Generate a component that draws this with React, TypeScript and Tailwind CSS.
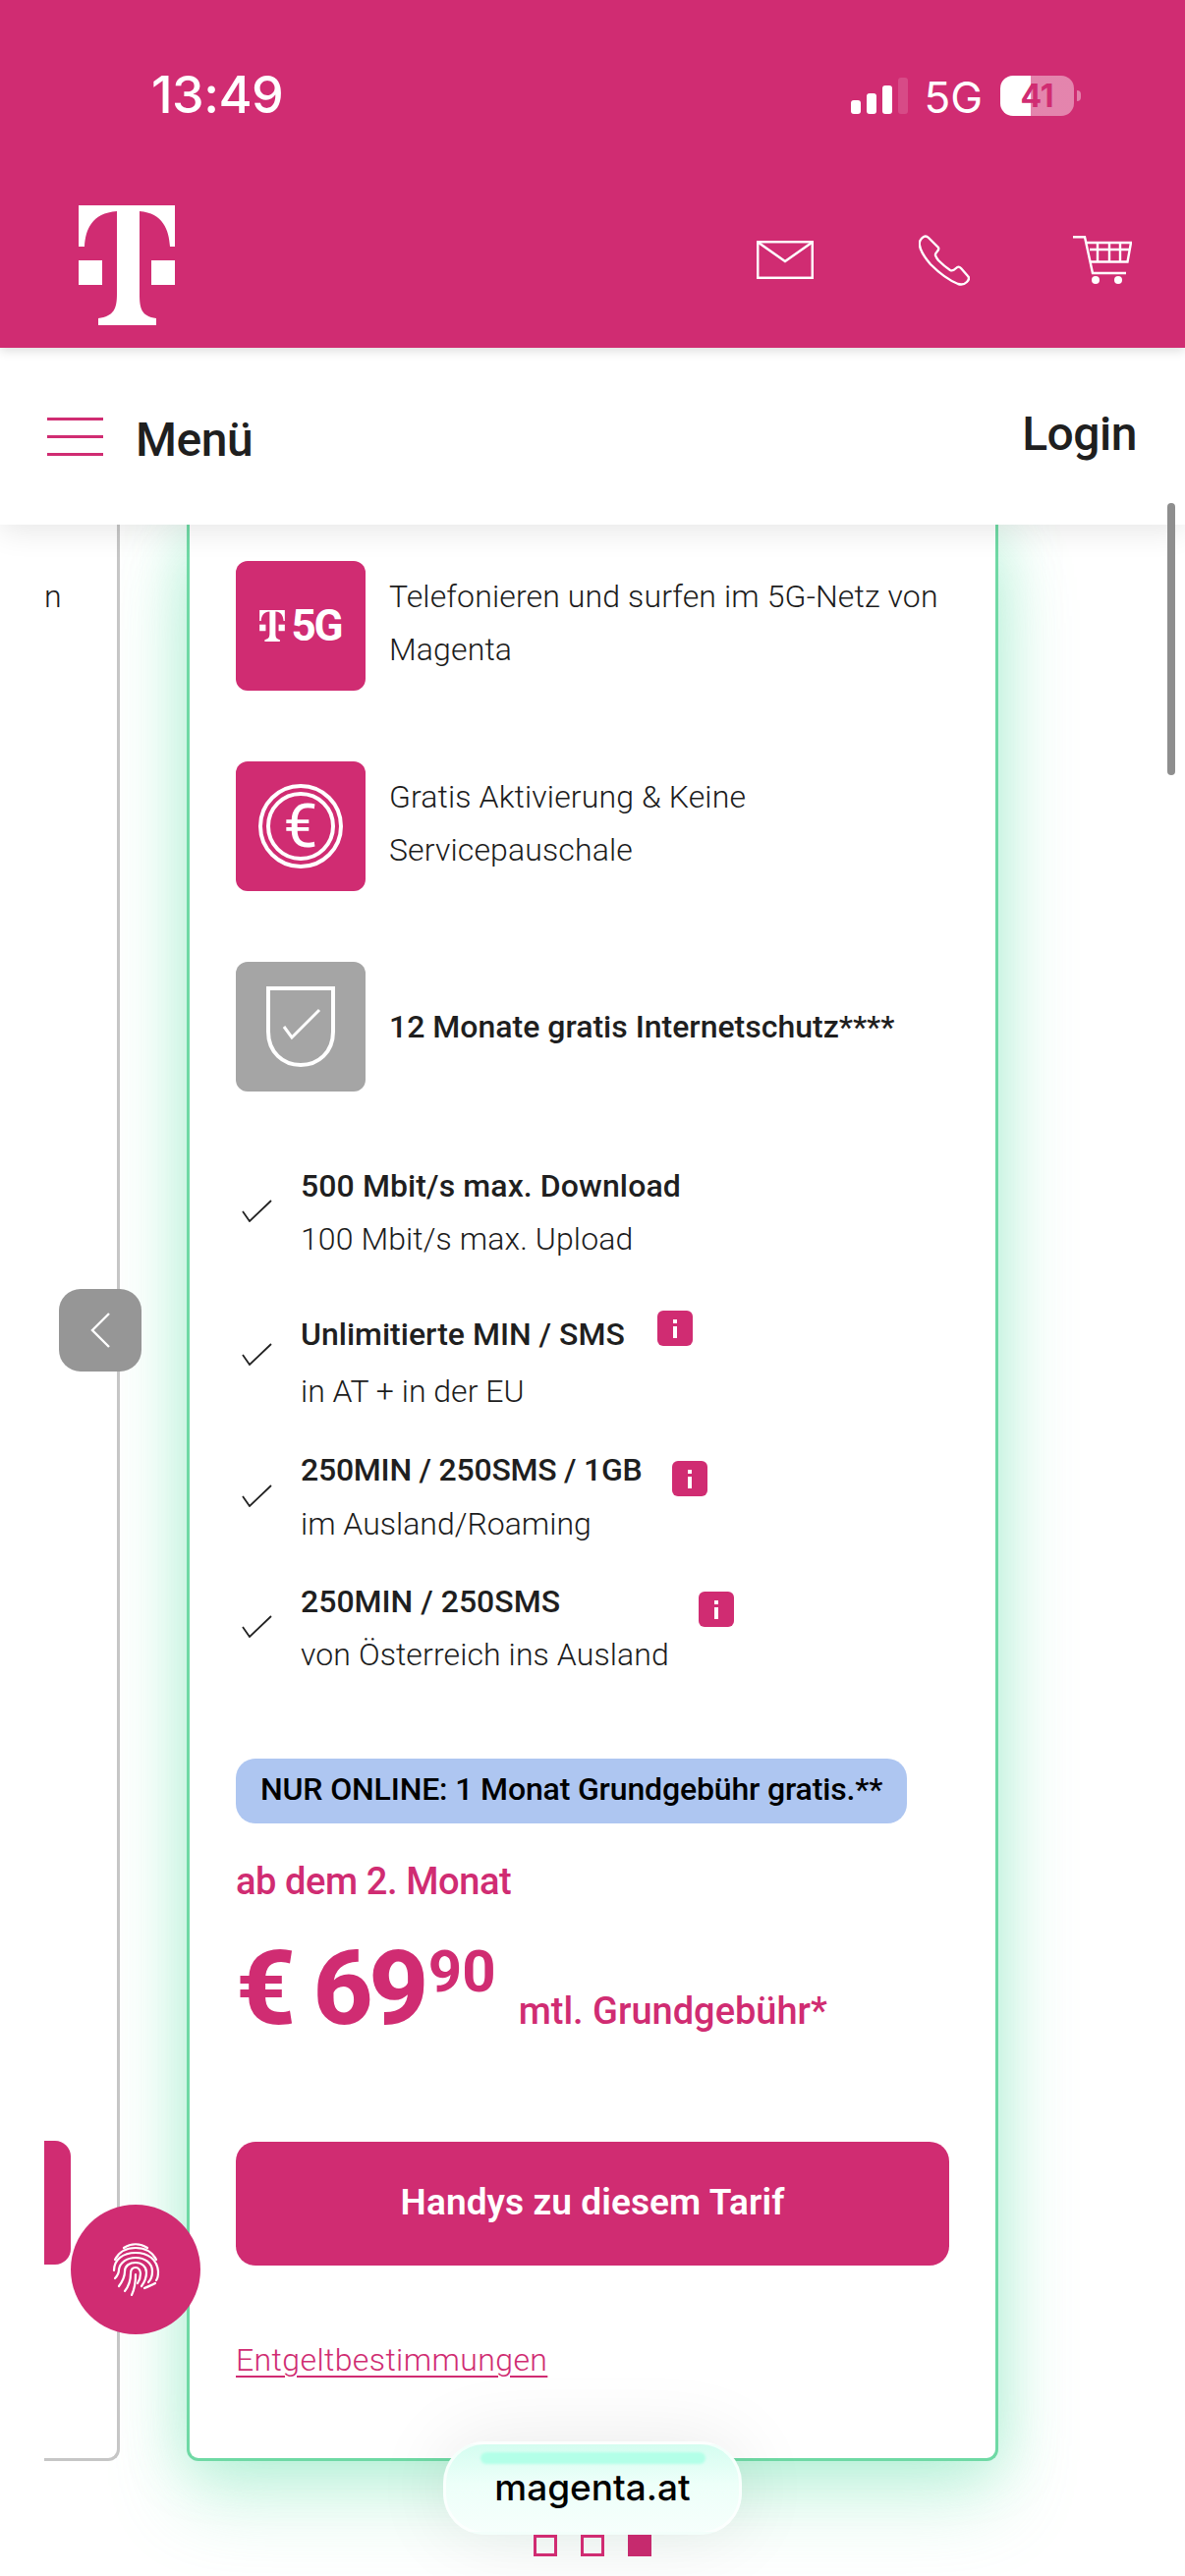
import React from 'react';

const MAGENTA = 'text-[#d02c72]';

function CheckMark({ className }: { className: string }) {
  return (
    <svg viewBox="0 0 31 23" className={`w-[31px] h-[23px] shrink-0 ${className}`} fill="none" stroke="#222" strokeWidth="1.8">
      <path d="M1 12l7 10L30 1" />
    </svg>
  );
}

function InfoBadge({ className }: { className: string }) {
  return (
    <span className={`w-9 h-9 shrink-0 rounded-md bg-[#d02c72] flex flex-col items-center justify-center gap-[3px] ${className}`}>
      <span className="w-[4px] h-[4px] bg-white" />
      <span className="w-[4px] h-[12px] bg-white" />
    </span>
  );
}

function TLogo({ className }: { className: string }) {
  return (
    <svg viewBox="0 0 98 122" className={className} fill="#fff">
      <path d="M0 0H98V42H93C92 25 86 8 62 6V90C62 105 64 113 79 115V122H20V115C36 113 39 105 39 90V6C13 8 7 25 6 42H0Z" />
      <rect x="0" y="56" width="24" height="25" />
      <rect x="74" y="56" width="24" height="25" />
    </svg>
  );
}

function StatusBar() {
  return (
    <div className="h-[200px] pl-[154px] pr-[106px] pt-[69px] flex items-start justify-between font-[Inter,sans-serif] text-white">
      <span className="text-[52px] leading-[56px] font-medium tracking-[-0.5px]">13:49</span>
      <div className="flex items-start pt-[8px]">
        <div className="flex items-end gap-[6px] h-[37px] mt-[2px]">
          <span className="w-[10px] h-[14px] rounded-[3px] bg-white" />
          <span className="w-[10px] h-[21px] rounded-[3px] bg-white" />
          <span className="w-[10px] h-[29px] rounded-[3px] bg-white" />
          <span className="w-[10px] h-[37px] rounded-[3px] bg-white/15" />
        </div>
        <span className="ml-[16px] text-[44px] leading-[40px] mt-[2px] font-normal">5G</span>
        <span className="ml-[18px] w-[75px] h-[41px] rounded-[13px] bg-[linear-gradient(90deg,#fff_41%,rgba(255,255,255,0.42)_41%)] text-[#d02c72] text-[32px] leading-[41px] font-bold text-center">41</span>
        <span className="ml-[3px] mt-[15px] w-[4px] h-[11px] rounded-r bg-white/40" />
      </div>
    </div>
  );
}

function Header() {
  return (
    <header className="relative z-30 bg-[#d02c72] h-[354px] shrink-0 shadow-[0_3px_10px_rgba(0,0,0,0.14)]">
      <StatusBar />
      <div className="flex items-center pl-[80px] pr-[54px] h-[122px] mt-[9px]">
        <TLogo className="w-[98px] h-[122px]" />
        <svg viewBox="0 0 58 39" className="ml-auto mb-[11px] w-[58px] h-[39px]" fill="none" stroke="#fff" strokeWidth="2.5">
          <rect x="1.2" y="1.2" width="55.6" height="36.6" />
          <path d="M2 2l27 19L56 2" />
        </svg>
        <svg viewBox="0 0 52 52" className="ml-[107px] mb-[11px] w-[52px] h-[52px]" fill="none" stroke="#fff" strokeWidth="2.4">
          <path d="M5 2C7 1 8 1 10 3L20 13C21 15 20 16 18 18C16 20 17 22 20 26C25 31 29 34 32 36C34 37 36 36 38 34C40 32 41 32 43 34L50 42C52 44 51 46 49 48C46 51 43 51 40 50C30 46 20 38 12 30C6 23 2 17 1 11C0 7 2 4 5 2Z" />
        </svg>
        <svg viewBox="0 0 60 49" className="ml-[105px] mb-[11px] w-[60px] h-[49px]" fill="none" stroke="#fff" strokeWidth="2.4">
          <path d="M0 1.2H12L20 38H54" />
          <path d="M14 7H59L55.5 26.5H18M17 14H58M25 7V26M37 7V26M48 7V26" />
          <circle cx="23" cy="45" r="4" fill="#fff" stroke="none" />
          <circle cx="46" cy="45" r="4" fill="#fff" stroke="none" />
        </svg>
      </div>
    </header>
  );
}

function NavBar() {
  return (
    <nav className="relative z-20 h-[180px] shrink-0 bg-white pl-[48px] pr-[49px] flex items-center shadow-[0_8px_28px_rgba(0,0,0,0.09)]">
      <div className="w-[57px] flex flex-col gap-[15px]">
        <span className="h-[3px] bg-[#d02c72]" />
        <span className="h-[3px] bg-[#d02c72]" />
        <span className="h-[3px] bg-[#d02c72]" />
      </div>
      <span className="ml-[33px] text-[48px] leading-[56px] font-medium text-[#1f1f1f] mt-[8px] tracking-[-0.5px]">Menü</span>
      <span className="ml-auto text-[48px] leading-[56px] font-medium text-[#1f1f1f] mt-[-4px] tracking-[-0.5px]">Login</span>
    </nav>
  );
}

function FeatureRow({ tile, children }: { tile: React.ReactNode; children: React.ReactNode }) {
  return (
    <div className="flex items-center gap-6 h-[132px]">
      {tile}
      {children}
    </div>
  );
}

function Tile5G() {
  return (
    <div className="w-[132px] h-[132px] rounded-[12px] bg-[#d02c72] flex items-center justify-center gap-[6px] shrink-0">
      <TLogo className="w-[26px] h-[32px]" />
      <span className="text-white text-[44px] leading-[44px] font-bold tracking-[-2px]">5G</span>
    </div>
  );
}

function TileEuro() {
  return (
    <div className="relative w-[132px] h-[132px] rounded-[12px] bg-[#d02c72] flex items-center justify-center shrink-0">
      <svg viewBox="0 0 88 88" className="absolute w-[88px] h-[88px]" fill="none" stroke="#fff" strokeWidth="4">
        <circle cx="44" cy="44" r="41" />
        <circle cx="44" cy="44" r="33" />
      </svg>
      <span className="text-white text-[62px] leading-[62px] font-normal">€</span>
    </div>
  );
}

function TileShield() {
  return (
    <div className="w-[132px] h-[132px] rounded-[12px] bg-[#a5a5a5] flex items-center justify-center shrink-0">
      <svg viewBox="0 0 70 82" className="w-[70px] h-[82px]" fill="none" stroke="#fff" strokeWidth="4">
        <path d="M2 2H68V46C68 67 53 80 35 80C17 80 2 67 2 46Z" />
        <path d="M18 41l8 11L54 24" strokeWidth="3" />
      </svg>
    </div>
  );
}

const FEATURE_TEXT = 'text-[32px] leading-[54px] text-[#1c1c1c] font-light tracking-[0.13px] mt-[-6px]';

function MainCard() {
  return (
    <section className="w-[826px] h-[1971px] shrink-0 border-x-[3px] border-b-[3px] border-[#6fd9a5] rounded-b-[12px] bg-white pl-[47px] pr-[47px] pt-[37px] flex flex-col shadow-[0_0_60px_rgba(95,225,170,0.36),0_40px_80px_rgba(95,225,170,0.3)]">
      <div className="flex flex-col gap-[72px]">
        <FeatureRow tile={<Tile5G />}>
          <div className={FEATURE_TEXT}>
            Telefonieren und surfen im 5G-Netz von
            <br />
            Magenta
          </div>
        </FeatureRow>
        <FeatureRow tile={<TileEuro />}>
          <div className={FEATURE_TEXT}>
            Gratis Aktivierung &amp; Keine
            <br />
            Servicepauschale
          </div>
        </FeatureRow>
        <FeatureRow tile={<TileShield />}>
          <div className="text-[32px] leading-[54px] font-medium text-[#1f1f1f]">12 Monate gratis Internetschutz****</div>
        </FeatureRow>
      </div>

      <ul className="mt-[69px] text-[32px] leading-[54px] text-[#1c1c1c] font-light">
        <li className="flex items-center">
          <CheckMark className="ml-[6px] mr-[29px] mt-[-4px]" />
          <div>
            <div className="font-medium text-[#1f1f1f] tracking-[0.1px]">500 Mbit/s max. Download</div>
            <div className="tracking-[0.1px]">100 Mbit/s max. Upload</div>
          </div>
        </li>
        <li className="flex items-center mt-[43px]">
          <CheckMark className="ml-[6px] mr-[29px] mt-[-18px]" />
          <div>
            <div className="flex items-center">
              <span className="w-[363px] whitespace-nowrap font-medium text-[#1f1f1f]">Unlimitierte MIN / SMS</span>
              <InfoBadge className="mb-[12px]" />
            </div>
            <div className="mt-[4px]">in AT + in der EU</div>
          </div>
        </li>
        <li className="flex items-center mt-[26px]">
          <CheckMark className="ml-[6px] mr-[29px] mt-[-2px]" />
          <div>
            <div className="flex items-center">
              <span className="w-[378px] whitespace-nowrap font-medium text-[#1f1f1f] tracking-[-0.24px]">250MIN / 250SMS / 1GB</span>
              <InfoBadge className="mt-[18px]" />
            </div>
            <div className="mt-[1px]">im Ausland/Roaming</div>
          </div>
        </li>
        <li className="flex items-center mt-[25px]">
          <CheckMark className="ml-[6px] mr-[29px] mt-[-4px]" />
          <div>
            <div className="flex items-center">
              <span className="w-[405px] whitespace-nowrap font-medium text-[#1f1f1f]">250MIN / 250SMS</span>
              <InfoBadge className="mt-[16px]" />
            </div>
            <div className="tracking-[0.1px]">von Österreich ins Ausland</div>
          </div>
        </li>
      </ul>

      <div className="mt-[79px] w-[683px] h-[66px] rounded-[20px] bg-[#aec6f1] pl-[25px] pb-[4px] flex items-center text-[32px] font-medium text-black whitespace-nowrap tracking-[-0.15px]">
        NUR ONLINE: 1 Monat Grundgebühr gratis.**
      </div>

      <div className={`mt-[35px] text-[38px] leading-[48px] font-medium tracking-[-0.4px] ${MAGENTA}`}>ab dem 2. Monat</div>

      <div className={`mt-[40px] h-[100px] flex items-start whitespace-nowrap ${MAGENTA}`}>
        <span className="text-[106px] leading-[90px] font-extrabold tracking-[-4.5px]">€ 69</span>
        <span className="text-[60px] leading-[56px] font-bold ml-[4px]">90</span>
        <span className="text-[38px] leading-[48px] font-medium ml-[23px] mt-[44px]">mtl. Grundgebühr*</span>
      </div>

      <button type="button" className="mt-[101px] w-[726px] h-[126px] rounded-[20px] bg-[#d02c72] text-white text-[37px] font-semibold tracking-[0.1px] pb-[2px]">
        Handys zu diesem Tarif
      </button>

      <a className={`mt-[72px] self-start text-[32px] leading-[48px] font-light underline decoration-2 underline-offset-[5px] tracking-[0.4px] ${MAGENTA}`}>
        Entgeltbestimmungen
      </a>
    </section>
  );
}

function PrevCardStub() {
  return (
    <aside className="relative z-10 w-[77px] h-[1971px] shrink-0 bg-white border-r-[3px] border-b-[3px] border-[#c6c6c6] rounded-br-[12px] overflow-hidden pt-[46px] flex flex-col">
      <span className="text-[32px] leading-[54px] font-light text-[#1c1c1c]">n</span>
      <span className="mt-auto mb-[197px] w-[27px] h-[126px] rounded-r-[16px] bg-[#d02c72]" />
    </aside>
  );
}

function Fingerprint() {
  return (
    <svg viewBox="0 0 50 54" className="w-[50px] h-[54px]" fill="none" stroke="#fff" strokeWidth="2.2" strokeLinecap="round">
      <path d="M13 5C20 0 30 0 37 5" />
      <path d="M4 17C8 9 16 5 25 5C34 5 42 9 46 17" />
      <path d="M3 28C3 17 12 10 25 10C38 10 47 17 48 29C48 33 48 36 46 38" />
      <path d="M4 36C7 33 8 30 8 27C9 20 16 15 25 15C34 15 42 20 42 29C42 33 41 37 38 40" />
      <path d="M8 44C11 40 14 36 14 29C14 23 19 20 25 20C31 20 36 24 36 30C36 35 34 40 31 44" />
      <path d="M14 49C18 44 20 38 20 31C20 27 22 25 25 25C28 25 30 28 30 31C30 34 29 38 27 41" />
      <path d="M21 53C24 47 25 40 25 32" />
      <path d="M34 46C38 44 42 43 45 41" />
    </svg>
  );
}

export default function App() {
  return (
    <div className="relative w-[1206px] h-[2622px] overflow-hidden flex flex-col bg-white font-[Roboto,sans-serif]">
      <Header />
      <NavBar />
      <main className="flex-1 flex items-start pl-[45px] gap-[68px]">
        <PrevCardStub />
        <MainCard />
      </main>

      {/* Carousel arrow */}
      <button type="button" className="absolute z-30 left-[60px] top-[1312px] w-[84px] h-[84px] rounded-[22px] bg-[#969696] flex items-center justify-center">
        <svg viewBox="0 0 20 36" className="w-[20px] h-[36px]" fill="none" stroke="#fff" strokeWidth="2.4">
          <path d="M19 1L2 18l17 17" />
        </svg>
      </button>

      {/* Fingerprint button */}
      <div className="absolute z-30 left-[72px] top-[2244px] w-[132px] h-[132px] rounded-full bg-[#d02c72] flex items-center justify-center">
        <Fingerprint />
      </div>

      {/* Scrollbar */}
      <div className="absolute z-30 left-[1188px] top-[512px] w-[8px] h-[277px] rounded-full bg-[#8e8e8e]" />

      {/* Browser address pill */}
      <div className="absolute z-30 left-[451px] top-[2485px] w-[304px] h-[95px] rounded-[42px] border-[3px] border-white/70 bg-[linear-gradient(180deg,#d4fdf0_0%,#edfff9_45%,#f6fffc_100%)] shadow-[0_0_80px_rgba(0,0,0,0.09)] flex flex-col items-center">
        <span className="mt-[8px] w-[229px] h-[12px] rounded-full bg-[#b3ffe8] blur-[1px]" />
        <span className="text-[37px] leading-[48px] font-medium text-black font-[Inter,sans-serif]">magenta.at</span>
      </div>

      {/* Carousel dots */}
      <div className="absolute z-30 left-[543px] top-[2580px] flex gap-[24px]">
        <span className="w-[24px] h-[22px] border-[3px] border-[#d02c72]" />
        <span className="w-[24px] h-[22px] border-[3px] border-[#d02c72]" />
        <span className="w-[24px] h-[22px] bg-[#c62a6e]" />
      </div>
    </div>
  );
}
